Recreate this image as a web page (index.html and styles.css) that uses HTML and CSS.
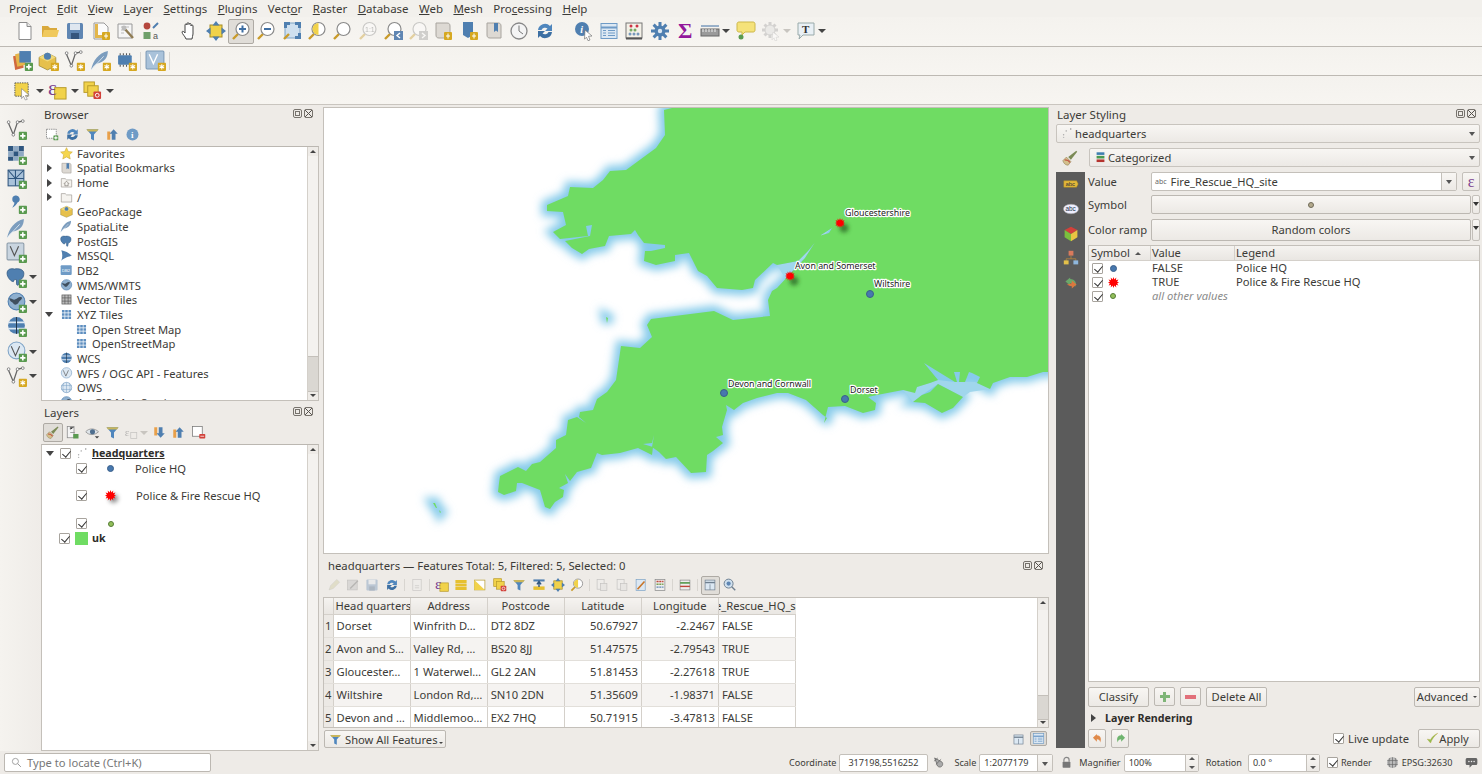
FILE: index.html
```html
<!DOCTYPE html>
<html lang="en">
<head>
    <meta charset="UTF-8">
    <title>QGIS</title>
    <link rel="stylesheet" href="styles.css">
</head>
<body>
<svg class="defs" aria-hidden="true">
    <symbol id="plus" viewBox="0 0 8 8"><rect width="8" height="8" rx="1" fill="#5a9a50"/><path d="M4 1.5v5M1.5 4h5" stroke="#fff" stroke-width="1.6"/></symbol>
    <symbol id="star" viewBox="0 0 8 8"><rect width="8" height="8" rx="1" fill="#d6a821"/><path d="M4 1.5v5M1.8 2.8l4.4 2.4M6.2 2.8L1.8 5.2" stroke="#fff" stroke-width="1"/></symbol>
    <symbol id="new" viewBox="0 0 20 20"><path d="M4 1.5h8l4 4v13H4z" fill="#fff" stroke="#8c8c8c"/><path d="M12 1.5v4h4" fill="#e8e8e8" stroke="#8c8c8c"/></symbol>
    <symbol id="open" viewBox="0 0 20 20"><path d="M2 5h6l2 2h7v9H2z" fill="#d9a93c"/><path d="M2 16l2-7h15l-2 7z" fill="#f0c95c"/></symbol>
    <symbol id="save" viewBox="0 0 20 20"><rect x="2" y="2" width="16" height="16" rx="1.5" fill="#5f86b3"/><rect x="5" y="2.5" width="10" height="6.5" fill="#dfe7f0"/><rect x="6" y="12" width="8" height="6" fill="#35557c"/></symbol>
    <symbol id="layout" viewBox="0 0 20 20"><path d="M3 2h10l4 4v12H3z" fill="#fbfbfb" stroke="#999"/><path d="M4 3h3v14H4zM4 14h10v3H4z" fill="#e3b64a"/><rect x="11" y="11" width="8" height="8" rx="1" fill="#d6a821"/><path d="M15 12.500v5M13 15h4" stroke="#fff"/></symbol>
    <symbol id="manager" viewBox="0 0 20 20"><path d="M2 3h14v14H2z" fill="#f6f6f6" stroke="#999"/><path d="M5 6h8M5 9h4M5 12h3" stroke="#bbb"/><path d="M8 7l9 10" stroke="#8f7b52" stroke-width="2.4"/><circle cx="8" cy="7" r="2.4" fill="#bcbcbc"/></symbol>
    <symbol id="style" viewBox="0 0 20 20"><circle cx="6" cy="5" r="3.4" fill="#b5483e"/><rect x="2.5" y="11" width="7" height="7" fill="#6fa06a"/><path d="M12 7l5-5" stroke="#4f7fb0" stroke-width="2"/><text x="12" y="18" font-size="9" fill="#555" font-family="Liberation Sans">a</text></symbol>
    <symbol id="pan" viewBox="0 0 20 20"><path d="M6 18c-1-3-4-5-4-7 0-1 2-1 3 1V4c0-1.500 2-1.500 2 0V2.800c0-1.500 2-1.500 2 0V3.500c0-1.500 2-1.500 2 0V5c0-1.500 2-1.500 2 0v8c0 2-1 3-1 5z" fill="#fff" stroke="#444"/></symbol>
    <symbol id="pansel" viewBox="0 0 20 20"><rect x="4" y="4" width="12" height="12" fill="#f1d24a" stroke="#a58c24"/><path d="M10 0l3.500 4.500h-7zM10 20l-3.500-4.500h7zM0 10l4.500-3.500v7zM20 10l-4.500 3.500v-7z" fill="#4f7fb0"/></symbol>
    <symbol id="mag" viewBox="0 0 20 20"><path d="M7 13l-5 5" stroke="#c99b2a" stroke-width="2.4"/><circle cx="11.5" cy="8" r="6.5" fill="#fff" stroke="#8a8a8a" stroke-width="1.2"/></symbol>
    <symbol id="zoomin" viewBox="0 0 20 20"><use href="#mag"/><path d="M11.5 4.500v7M8 8h7" stroke="#3f6fa3" stroke-width="2"/></symbol>
    <symbol id="zoomout" viewBox="0 0 20 20"><use href="#mag"/><path d="M8 8h7" stroke="#3f6fa3" stroke-width="2"/></symbol>
    <symbol id="zoomfull" viewBox="0 0 20 20"><rect x="3" y="2" width="15" height="15" fill="#cfe0ef" stroke="#7ea3c6"/><path d="M2 1h6v3H5v3H2zM19 1h-6v3h3v3h3zM19 18h-6v-3h3v-3h3z" fill="#4f7fb0"/><path d="M7 13l-5 5" stroke="#c99b2a" stroke-width="2.4"/></symbol>
    <symbol id="zoomsel" viewBox="0 0 20 20"><use href="#mag"/><path d="M11.5 2a6 6 0 0 0 0 12z" fill="#f1d24a"/></symbol>
    <symbol id="zoomnat" viewBox="0 0 20 20" opacity=".4"><use href="#mag"/><text x="7" y="11" font-size="7" fill="#666" font-family="Liberation Sans">1:1</text></symbol>
    <symbol id="zoomlast" viewBox="0 0 20 20"><use href="#mag"/><rect x="11" y="10" width="9" height="9" fill="#5f86b3"/><path d="M17 12l-3 2.5 3 2.500" fill="none" stroke="#fff" stroke-width="1.4"/></symbol>
    <symbol id="zoomnext" viewBox="0 0 20 20" opacity=".4"><use href="#mag"/><rect x="11" y="10" width="9" height="9" fill="#999"/><path d="M14 12l3 2.5-3 2.500" fill="none" stroke="#fff" stroke-width="1.4"/></symbol>
    <symbol id="scroll" viewBox="0 0 20 20"><path d="M3 2h11c2 0 3 1 3 3v12H6c-2 0-3-1-3-3z" fill="#ddd9d3" stroke="#a8a49e"/></symbol>
    <symbol id="bkadd" viewBox="0 0 20 20"><use href="#scroll"/><rect x="11" y="11" width="8" height="8" rx="1" fill="#d6a821"/><path d="M15 12.500v5M13 15h4" stroke="#fff"/></symbol>
    <symbol id="bkshow" viewBox="0 0 20 20"><path d="M4 1h10v13l-5 3-5-3z" fill="#4f7fb0"/><rect x="11" y="11" width="8" height="8" rx="1" fill="#d6a821"/><path d="M15 12.500v5M13 15h4" stroke="#fff"/></symbol>
    <symbol id="bkscroll" viewBox="0 0 20 20"><use href="#scroll"/><path d="M10 2h4v9l-2-1.500-2 1.500z" fill="#4f7fb0"/></symbol>
    <symbol id="clock" viewBox="0 0 20 20"><circle cx="10" cy="10" r="8" fill="#f4f4f4" stroke="#888" stroke-width="1.3"/><path d="M10 4.500V10l4 3" fill="none" stroke="#777"/></symbol>
    <symbol id="refresh" viewBox="0 0 20 20"><path d="M3 9a7 7 0 0 1 12-4l2-2v7h-7l2.500-2.500A4 4 0 0 0 6.500 9z" fill="#4f86bd"/><path d="M17 11a7 7 0 0 1-12 4l-2 2v-7h7l-2.500 2.500a4 4 0 0 0 6 -1.500z" fill="#3c6fa3"/></symbol>
    <symbol id="identify" viewBox="0 0 20 20"><circle cx="8" cy="8" r="7" fill="#4f7fb0"/><text x="6.200" y="12" font-size="10" font-weight="bold" font-style="italic" fill="#fff" font-family="Liberation Serif">i</text><path d="M11 9l7 6-3.500.3 1.500 3.700-2 .7-1.500-3.500-2 2z" fill="#fff" stroke="#777" stroke-width=".7"/></symbol>
    <symbol id="table" viewBox="0 0 20 20"><rect x="2" y="2.500" width="16" height="15" fill="#dce8f3" stroke="#6f9bc6"/><path d="M2 6.500h16" stroke="#6f9bc6" stroke-width="2"/><path d="M4 9.500h3M9 9.500h7M4 12h3M9 12h7M4 14.500h3M9 14.500h7" stroke="#6f9bc6"/></symbol>
    <symbol id="abacus" viewBox="0 0 20 20"><rect x="2" y="2" width="16" height="15" fill="#f4f1e8" stroke="#777"/><path d="M2 17.500h16" stroke="#555" stroke-width="2"/><circle cx="7" cy="5" r="1.500" fill="#c34"/><circle cx="13" cy="5" r="1.500" fill="#c34"/><circle cx="7" cy="9" r="1.500" fill="#7a6"/><circle cx="11" cy="9" r="1.500" fill="#7a6"/><circle cx="6" cy="13" r="1.500" fill="#79b"/><circle cx="10" cy="13" r="1.500" fill="#79b"/><circle cx="14" cy="13" r="1.500" fill="#79b"/></symbol>
    <symbol id="gear" viewBox="0 0 20 20"><path d="M10 1v18M1 10h18M3.600 3.600l12.800 12.800M16.400 3.600L3.600 16.400" stroke="#4f7fb0" stroke-width="3"/><circle cx="10" cy="10" r="5.500" fill="#4f7fb0"/><circle cx="10" cy="10" r="2.200" fill="#dce8f3"/></symbol>
    <symbol id="ruler" viewBox="0 0 20 20"><rect x="1" y="8" width="18" height="7" fill="#9a9a9a" stroke="#666"/><path d="M3 8v3M6 8v3M9 8v3M12 8v3M15 8v3" stroke="#eee"/><path d="M1 5h18" stroke="#3f6fa3"/></symbol>
    <symbol id="tip" viewBox="0 0 20 20"><path d="M3 1h14c1.500 0 2 1 2 2v6c0 1.500-1 2-2 2H9l-3 3v-3H3c-1.500 0-2-1-2-2V3c0-1 .5-2 2-2z" fill="#f5e27a" stroke="#cdb84a"/><circle cx="5" cy="16" r="2.500" fill="#5a9a50"/></symbol>
    <symbol id="gearoff" viewBox="0 0 20 20" opacity=".45"><path d="M9 1v16M1 9h16M3.500 3.500l11 11M14.500 3.500l-11 11" stroke="#aaa" stroke-width="3"/><circle cx="9" cy="9" r="5" fill="#ddd" stroke="#aaa"/><path d="M12 11l6 5-3 .3 1 3-2 .5-1-3-2 2z" fill="#fff" stroke="#aaa" stroke-width=".6"/></symbol>
    <symbol id="ttext" viewBox="0 0 20 20"><path d="M2 2h16v12H7l-4 4 1-4H2z" fill="#e9f0f5" stroke="#9aa"/><text x="6" y="12" font-size="11" font-weight="bold" fill="#333" font-family="Liberation Serif">T</text></symbol>
    <symbol id="addlayers" viewBox="0 0 20 20"><path d="M1 6l9-2 1 13-8 2z" fill="#d1693f"/><path d="M3 4l9-2 1 12-8 2z" fill="#e5b64a"/><rect x="7" y="1" width="11" height="11" fill="#4f7fb0"/><use href="#plus" x="12" y="12" width="8" height="8"/></symbol>
    <symbol id="gpkgnew" viewBox="0 0 20 20"><path d="M1 7l8-4 8 4v8l-8 4-8-4z" fill="#e6c04c" stroke="#8b7a2e" stroke-width=".6"/><path d="M1 7l8 4 8-4-8-4z" fill="#f1d97a"/><circle cx="9" cy="6" r="3.400" fill="#4f7fb0"/><use href="#star" x="12" y="12" width="8" height="8"/></symbol>
    <symbol id="vec" viewBox="0 0 20 20"><path d="M2 3l5 12 4-12 5-1" fill="none" stroke="#666" stroke-width="1.2"/><circle cx="2.500" cy="3" r="1.300" fill="#fff" stroke="#666" stroke-width=".7"/><circle cx="7" cy="15" r="1.300" fill="#fff" stroke="#666" stroke-width=".7"/><circle cx="11" cy="3" r="1.300" fill="#fff" stroke="#666" stroke-width=".7"/><circle cx="16" cy="2" r="1.300" fill="#fff" stroke="#666" stroke-width=".7"/></symbol>
    <symbol id="vecstar" viewBox="0 0 20 20"><use href="#vec"/><use href="#star" x="12" y="12" width="8" height="8"/></symbol>
    <symbol id="vecplus" viewBox="0 0 20 20"><use href="#vec"/><use href="#plus" x="12" y="12" width="8" height="8"/></symbol>
    <symbol id="feather" viewBox="0 0 20 20"><path d="M1 19C3 10 8 3 17 1c0 6-3 11-11 12L3 16z" fill="#7c9dbe"/><path d="M1 19L13 6" stroke="#e4ecf3" stroke-width=".8"/></symbol>
    <symbol id="featherstar" viewBox="0 0 20 20"><use href="#feather"/><use href="#star" x="12" y="12" width="8" height="8"/></symbol>
    <symbol id="featherplus" viewBox="0 0 20 20"><use href="#feather"/><use href="#plus" x="12" y="12" width="8" height="8"/></symbol>
    <symbol id="chip" viewBox="0 0 20 20"><rect x="2" y="5" width="13" height="9" rx="1" fill="#4f7fb0"/><path d="M4 3v2M7 3v2M10 3v2M13 3v2M4 14v2M7 14v2M10 14v2" stroke="#555"/><use href="#star" x="12" y="12" width="8" height="8"/></symbol>
    <symbol id="virt" viewBox="0 0 20 20"><rect x="1" y="1" width="17" height="17" rx="1" fill="#a9c2da" stroke="#7d9ab6"/><path d="M4 4l4 9 4-9" fill="none" stroke="#fff" stroke-width="1.3"/><use href="#star" x="12" y="12" width="8" height="8"/></symbol>
    <symbol id="virtplus" viewBox="0 0 20 20"><rect x="1" y="1" width="16" height="16" rx="1" fill="#c9d5e0" stroke="#8a9aa8"/><path d="M4 4l4 9 4-9" fill="none" stroke="#555" stroke-width="1.1"/><use href="#plus" x="12" y="12" width="8" height="8"/></symbol>
    <symbol id="sel" viewBox="0 0 20 20"><rect x="2" y="2" width="14" height="14" fill="#f1d24a" stroke="#555" stroke-dasharray="1.5 1"/><path d="M9 8l8 7-4 .3 2 4-2 .7-2-4-2 2.500z" fill="#fff" stroke="#777" stroke-width=".6"/></symbol>
    <symbol id="selexpr" viewBox="0 0 20 20"><rect x="7" y="7" width="12" height="12" fill="#f1d24a" stroke="#b79a2a"/><text x="0" y="15" font-size="22" fill="#7b3f8f" font-family="Liberation Serif">&#949;</text></symbol>
    <symbol id="desel" viewBox="0 0 20 20"><rect x="1" y="1" width="11" height="11" fill="#f1d24a" stroke="#b79a2a"/><rect x="5" y="5" width="11" height="11" fill="#f1d24a" stroke="#b79a2a"/><rect x="11" y="11" width="8" height="8" rx="1" fill="#d2413a"/><circle cx="15" cy="15" r="2" fill="none" stroke="#fff"/></symbol>
    <symbol id="rast" viewBox="0 0 20 20"><path d="M2 2h5v5H2zM12 2h5v5h-5zM7 7h5v5H7zM2 12h5v4H2z" fill="#2f567f"/><path d="M7 2h5v5H7zM2 7h5v5H2zM12 7h5v5h-5zM7 12h5v4H7z" fill="#8fa9c4"/><use href="#plus" x="12" y="12" width="8" height="8"/></symbol>
    <symbol id="mesh" viewBox="0 0 20 20"><rect x="2" y="2" width="15" height="15" fill="#a9c2da" stroke="#2f567f"/><path d="M2 10h15M9 2v15M2 2l7 8M9 10l8-8" stroke="#2f567f"/><use href="#plus" x="12" y="12" width="8" height="8"/></symbol>
    <symbol id="wave" viewBox="0 0 20 20"><path d="M6 6a3.500 3.500 0 1 1 5 3c-1 2-3 4-5 5 1-2 2-3 2-5-1 0-2-1-2-3z" fill="#4f7fb0"/><use href="#plus" x="12" y="12" width="8" height="8"/></symbol>
    <symbol id="pg" viewBox="0 0 20 20"><path d="M1 6c0-4 4-5 7-4 3-1 9 0 9 4s-2 6-4 6l-1 5c-1 1-2 0-2-1V12H8l-1 2C5 14 1 10 1 6z" fill="#4f7fb0" stroke="#2f567f" stroke-width=".7"/></symbol>
    <symbol id="pgplus" viewBox="0 0 20 20"><use href="#pg"/><use href="#plus" x="12" y="12" width="8" height="8"/></symbol>
    <symbol id="globe" viewBox="0 0 20 20"><circle cx="10" cy="9" r="8" fill="#8fb0cf" stroke="#4f7fb0"/><path d="M3 6c3 0 4 2 6 1s3-3 6-2c1 2-2 3-3 5s-4 3-5 1-3-1-4-5z" fill="#3f4f5f"/></symbol>
    <symbol id="globeplus" viewBox="0 0 20 20"><use href="#globe"/><use href="#plus" x="12" y="12" width="8" height="8"/></symbol>
    <symbol id="wcs" viewBox="0 0 20 20"><circle cx="10" cy="9" r="8" fill="#4f7fb0"/><path d="M2 6h16M2 12h16" stroke="#dce8f3" stroke-width="1.6"/><path d="M10 1v16" stroke="#24374a"/></symbol>
    <symbol id="wcsplus" viewBox="0 0 20 20"><use href="#wcs"/><use href="#plus" x="12" y="12" width="8" height="8"/></symbol>
    <symbol id="wfs" viewBox="0 0 20 20"><circle cx="10" cy="9" r="8" fill="#dce8f3" stroke="#7ea3c6"/><path d="M5 5l4 9 4-9" fill="none" stroke="#555"/></symbol>
    <symbol id="wfsplus" viewBox="0 0 20 20"><use href="#wfs"/><use href="#plus" x="12" y="12" width="8" height="8"/></symbol>
    <symbol id="ows" viewBox="0 0 20 20"><circle cx="10" cy="10" r="8" fill="#dce8f3" stroke="#7ea3c6"/><path d="M2 7h16M2 13h16M10 2v16M6 3c-2 4-2 10 0 14M14 3c2 4 2 10 0 14" fill="none" stroke="#7ea3c6" stroke-width=".8"/></symbol>
    <symbol id="fav" viewBox="0 0 20 20"><path d="M10 1l2.800 6 6.200.7-4.600 4.300 1.300 6.500L10 15.300 4.300 18.500 5.600 12 1 7.700 7.200 7z" fill="#f5d64c" stroke="#c8a530" stroke-width=".8"/></symbol>
    <symbol id="folder" viewBox="0 0 20 20"><path d="M2 4h6l2 2h8v11H2z" fill="#f5f3ef" stroke="#9a968f"/></symbol>
    <symbol id="home" viewBox="0 0 20 20"><use href="#folder"/><path d="M6 12l4-4 4 4M7.500 11v4h5v-4" fill="none" stroke="#77736c"/></symbol>
    <symbol id="gpkg" viewBox="0 0 20 20"><path d="M1 6l9-4 9 4v9l-9 4-9-4z" fill="#e6c04c" stroke="#8b7a2e" stroke-width=".6"/><path d="M1 6l9 4 9-4-9-4z" fill="#f1d97a"/><circle cx="10" cy="6" r="3" fill="#4f7fb0"/></symbol>
    <symbol id="mssql" viewBox="0 0 20 20"><path d="M2 2c5 1 12 4 16 8-4 2-11 3-16 8 2-5 2-11 0-16z" fill="#4f7fb0"/></symbol>
    <symbol id="db2" viewBox="0 0 20 20"><rect x="1" y="2" width="17" height="15" rx="1.5" fill="#6f9bc6"/><text x="3" y="12" font-size="6.500" fill="#fff" font-family="Liberation Sans">DB2</text></symbol>
    <symbol id="vt" viewBox="0 0 20 20"><rect x="3" y="3" width="14" height="14" fill="#bbb" stroke="#555"/><path d="M3 7.500h14M3 12.500h14M7.500 3v14M12.500 3v14" stroke="#555"/></symbol>
    <symbol id="xyz" viewBox="0 0 20 20"><path d="M3 3h4v4H3zM8 3h4v4H8zM13 3h4v4h-4zM3 8h4v4H3zM8 8h4v4H8zM13 8h4v4h-4zM3 13h4v4H3zM8 13h4v4H8zM13 13h4v4h-4z" fill="#5f8fc0"/></symbol>
    <symbol id="bknew" viewBox="0 0 20 20"><rect x="2" y="3" width="13" height="12" fill="#fff" stroke="#777" stroke-dasharray="2 1"/><use href="#plus" x="11" y="11" width="7" height="7"/></symbol>
    <symbol id="filter" viewBox="0 0 20 20"><path d="M2 3h16l-6 7v8l-4-2v-6z" fill="#4f86bd"/><path d="M2 3h16l-2 3H4z" fill="#c9b55a"/></symbol>
    <symbol id="collapse" viewBox="0 0 20 20"><path d="M3 6h4v11H3z" fill="#e9a04a"/><path d="M9 9V17h5V9h3l-5.500-6L6 9z" fill="#4f7fb0"/></symbol>
    <symbol id="expand" viewBox="0 0 20 20"><path d="M3 3h4v11H3z" fill="#e9a04a"/><path d="M9 3v8H6l5.500 6L17 11h-3V3z" fill="#4f7fb0"/></symbol>
    <symbol id="info" viewBox="0 0 20 20"><circle cx="10" cy="10" r="8" fill="#6f9bc6"/><text x="8" y="14.500" font-size="12" font-weight="bold" fill="#fff" font-family="Liberation Serif">i</text></symbol>
    <symbol id="brush" viewBox="0 0 20 20"><path d="M2 13l4-4 5 5-3 4c-3 0-5-2-6-5z" fill="#d4c08c" stroke="#8a7b50" stroke-width=".6"/><path d="M4 12c3 0 5 1 6 3" stroke="#c25a48" stroke-width="1.5" fill="none"/><path d="M8 9l9-7 1 1-7 9z" fill="#7b8a55"/></symbol>
    <symbol id="legend" viewBox="0 0 20 20"><rect x="3" y="2" width="9" height="15" fill="#f4f4f4" stroke="#888"/><path d="M7 6v-3h5M7 10h6" stroke="#888"/><rect x="11" y="12" width="7" height="6" fill="#5a9a50"/></symbol>
    <symbol id="eye" viewBox="0 0 20 20"><path d="M1 9c4-5 12-5 17 0-5 5-13 5-17 0z" fill="#dfe5ea" stroke="#888"/><circle cx="10" cy="9" r="3.400" fill="#4f6f8f"/><path d="M13 15h6l-3 3z" fill="#444"/></symbol>
    <symbol id="exprgray" viewBox="0 0 20 20" opacity=".4"><text x="1" y="14" font-size="15" fill="#666" font-family="Liberation Serif">&#949;</text><rect x="9" y="10" width="8" height="8" fill="none" stroke="#888"/></symbol>
    <symbol id="rmlayer" viewBox="0 0 20 20"><rect x="2" y="2" width="13" height="13" fill="#fff" stroke="#777"/><rect x="11" y="12" width="8" height="6" rx="1" fill="#d2413a"/><path d="M12.500 15h5" stroke="#fff"/></symbol>
    <symbol id="pencil" viewBox="0 0 20 20" opacity=".35"><path d="M3 17l2-6 9-9 4 4-9 9z" fill="#c9c58f" stroke="#888" stroke-width=".6"/></symbol>
    <symbol id="multiedit" viewBox="0 0 20 20" opacity=".4"><rect x="2" y="3" width="14" height="14" fill="#bbb" stroke="#888"/><path d="M6 15L17 4" stroke="#666" stroke-width="2"/></symbol>
    <symbol id="savedis" viewBox="0 0 20 20" opacity=".35"><use href="#save"/></symbol>
    <symbol id="pagedis" viewBox="0 0 20 20" opacity=".35"><rect x="4" y="2" width="12" height="16" fill="#eee" stroke="#888"/><path d="M7 11h6M7 14h6" stroke="#888"/></symbol>
    <symbol id="sellines" viewBox="0 0 20 20"><path d="M2 3h16v4H2zM2 8h16v4H2zM2 13h16v4H2z" fill="#e6c030"/></symbol>
    <symbol id="invert" viewBox="0 0 20 20"><rect x="2" y="3" width="15" height="14" fill="#fff" stroke="#b79a2a"/><path d="M2 3l15 14H2z" fill="#f1d24a"/></symbol>
    <symbol id="moveup" viewBox="0 0 20 20"><path d="M2 12h16v5H2z" fill="#e6c030"/><path d="M2 2h16v3H2z" fill="#4f7fb0"/><path d="M10 5v8M7 9l3-4 3 4" stroke="#2f567f" stroke-width="2" fill="none"/></symbol>
    <symbol id="copyd" viewBox="0 0 20 20" opacity=".4"><rect x="3" y="2" width="10" height="14" fill="#eee" stroke="#888"/><rect x="8" y="8" width="9" height="10" fill="#ddd" stroke="#888"/></symbol>
    <symbol id="calcf" viewBox="0 0 20 20"><rect x="3" y="2" width="13" height="16" fill="#dce8f3" stroke="#7ea3c6"/><path d="M5 16L15 5" stroke="#c9762a" stroke-width="2.4"/></symbol>
    <symbol id="grid" viewBox="0 0 20 20"><rect x="3" y="2" width="14" height="16" fill="#eee" stroke="#888"/><path d="M5 5h3M9 5h3M13 5h2" stroke="#c0453a" stroke-width="2"/><path d="M5 9h3M9 9h3M13 9h2" stroke="#7aa050" stroke-width="2"/><path d="M5 13h3M9 13h3M13 13h2" stroke="#5f86b3" stroke-width="2"/></symbol>
    <symbol id="cond" viewBox="0 0 20 20"><rect x="3" y="3" width="14" height="14" fill="#eee" stroke="#888"/><path d="M3 7h14" stroke="#5a9a50" stroke-width="2.4"/><path d="M3 12h14" stroke="#c0453a" stroke-width="2"/></symbol>
    <symbol id="formv" viewBox="0 0 20 20"><rect x="3" y="3" width="14" height="14" fill="#dce8f3" stroke="#6f7f8f"/><path d="M3 6.500h14" stroke="#6f7f8f" stroke-width="2"/><path d="M10 9v8" stroke="#6f7f8f"/></symbol>
    <symbol id="zoomblue" viewBox="0 0 20 20"><circle cx="8" cy="8" r="6.400" fill="#cfe0ef" stroke="#6f7f8f" stroke-width="1.4"/><circle cx="8" cy="8" r="3" fill="#5f86b3"/><path d="M12.500 12.500l5 5" stroke="#6f7f8f" stroke-width="2"/></symbol>
    <symbol id="points" viewBox="0 0 20 20"><circle cx="4" cy="12" r="1.100" fill="#aaa"/><circle cx="8" cy="6" r="1.100" fill="#999"/><circle cx="4" cy="16" r="1.100" fill="#bbb"/><circle cx="15" cy="3" r="1.100" fill="#888"/></symbol>
    <symbol id="burst" viewBox="0 0 20 20"><path d="M10 0l1.700 4.500L15 1l-.5 4.700L19 4.500l-2.500 4L20 10l-3.500 1.700L19 15.500l-4.500-1.200.5 4.700-3.300-3.500L10 20l-1.700-4.500L5 19l.5-4.700L1 15.500l2.500-3.800L0 10l3.500-1.500L1 4.500l4.500 1.200L5 1l3.300 3.500z" fill="#f00"/></symbol>
    <symbol id="classes" viewBox="0 0 20 20"><rect x="4" y="2" width="12" height="4" fill="#3f7fb0"/><rect x="4" y="7.500" width="12" height="4" fill="#4a9a50"/><rect x="4" y="13" width="12" height="4" fill="#b5332e"/></symbol>
    <symbol id="lblabc" viewBox="0 0 20 20"><path d="M1 6h16l2 4-2 4H1z" fill="#e3b83a" stroke="#a88a20" stroke-width=".6"/><text x="3" y="12.500" font-size="7.500" fill="#333" font-family="Liberation Sans">abc</text></symbol>
    <symbol id="maskabc" viewBox="0 0 20 20"><ellipse cx="10" cy="10" rx="9.500" ry="6" fill="#eef" stroke="#999" stroke-width=".6"/><text x="3" y="12.500" font-size="8" fill="#234" font-family="Liberation Sans">abc</text></symbol>
    <symbol id="cube3d" viewBox="0 0 20 20"><path d="M10 1l8 4-8 5-8-5z" fill="#d2413a"/><path d="M2 5l8 5v9l-8-5z" fill="#7bbf3e"/><path d="M18 5l-8 5v9l8-5z" fill="#e9c542"/></symbol>
    <symbol id="diagram" viewBox="0 0 20 20"><rect x="7" y="1" width="6" height="6" fill="#d97a5c"/><path d="M10 7v4M4 14v-3h12v3" stroke="#b8883c" fill="none"/><rect x="1" y="13" width="6" height="5" fill="#e3c04a"/><rect x="13" y="13" width="6" height="5" fill="#8fb7de"/></symbol>
    <symbol id="history" viewBox="0 0 20 20"><path d="M9 3L3 8l6 5V10c4 0 6 2 6 5 3-5 0-10-6-10z" fill="#6aa76a"/><path d="M11 7l6 5-6 5v-3c-3 0-5-1-6-3 2 1 4 0 6-1z" fill="#d9783f"/></symbol>
    <symbol id="undoi" viewBox="0 0 20 20"><path d="M9 3L3 9l6 6v-4c3 0 5 1 5 5 3-6 0-11-5-11z" fill="#e08a4a"/></symbol>
    <symbol id="redoi" viewBox="0 0 20 20"><path d="M11 3l6 6-6 6v-4c-3 0-5 1-5 5-3-6 0-11 5-11z" fill="#6fb56f"/></symbol>
    <symbol id="check" viewBox="0 0 20 20"><path d="M2 11l5 6C9 11 13 6 18 2c-5 2-9 6-11 10z" fill="#8cc152" stroke="#b9a030" stroke-width=".6"/></symbol>
    <symbol id="lock" viewBox="0 0 20 20"><path d="M6 9V6a4 4 0 0 1 8 0v3" fill="none" stroke="#888" stroke-width="1.8"/><rect x="4" y="9" width="12" height="9" rx="1" fill="#777"/></symbol>
    <symbol id="mouse" viewBox="0 0 20 20"><path d="M4 3l11 6c3 3 1 8-3 8-3 0-5-3-5-6z" fill="#aaa" stroke="#555"/><path d="M3 8l6-5M6 13l8-8" stroke="#555"/></symbol>
    <symbol id="epsg" viewBox="0 0 20 20"><circle cx="10" cy="10" r="8.500" fill="#bbb"/><path d="M2 7h16M2 13h16M10 2v16M6 3c-2 4-2 10 0 14M14 3c2 4 2 10 0 14" fill="none" stroke="#666"/></symbol>
    <symbol id="msg" viewBox="0 0 20 20"><path d="M4 3h12c2 0 3 1 3 3v5c0 2-1 3-3 3h-5l-4 4v-4H4c-2 0-3-1-3-3V6c0-2 1-3 3-3z" fill="#666"/><circle cx="6" cy="8.500" r="1.200" fill="#eee"/><circle cx="10" cy="8.500" r="1.200" fill="#eee"/><circle cx="14" cy="8.500" r="1.200" fill="#eee"/></symbol>
    <symbol id="search" viewBox="0 0 20 20"><circle cx="8" cy="8" r="5.500" fill="none" stroke="#999" stroke-width="1.6"/><path d="M12 12l6 6" stroke="#999" stroke-width="1.8"/></symbol>
</svg>

<nav class="menubar">
    <span>Pro<u>j</u>ect</span><span><u>E</u>dit</span><span><u>V</u>iew</span><span><u>L</u>ayer</span><span><u>S</u>ettings</span><span><u>P</u>lugins</span><span>Vect<u>o</u>r</span><span><u>R</u>aster</span><span><u>D</u>atabase</span><span><u>W</u>eb</span><span><u>M</u>esh</span><span>Pro<u>c</u>essing</span><span><u>H</u>elp</span>
</nav>

<div class="toolbar tb-main">
    <i class="grip"></i>
    <b class="tool"><svg><use href="#new"/></svg></b>
    <b class="tool"><svg><use href="#open"/></svg></b>
    <b class="tool"><svg><use href="#save"/></svg></b>
    <b class="tool"><svg><use href="#layout"/></svg></b>
    <b class="tool"><svg><use href="#manager"/></svg></b>
    <b class="tool"><svg><use href="#style"/></svg></b>
    <i class="grip"></i>
    <b class="tool"><svg><use href="#pan"/></svg></b>
    <b class="tool"><svg><use href="#pansel"/></svg></b>
    <b class="tool on"><svg><use href="#zoomin"/></svg></b>
    <b class="tool"><svg><use href="#zoomout"/></svg></b>
    <b class="tool"><svg><use href="#zoomfull"/></svg></b>
    <b class="tool"><svg><use href="#zoomsel"/></svg></b>
    <b class="tool"><svg><use href="#mag"/></svg></b>
    <b class="tool"><svg><use href="#zoomnat"/></svg></b>
    <b class="tool"><svg><use href="#zoomlast"/></svg></b>
    <b class="tool"><svg><use href="#zoomnext"/></svg></b>
    <b class="tool"><svg><use href="#bkadd"/></svg></b>
    <b class="tool"><svg><use href="#bkshow"/></svg></b>
    <b class="tool"><svg><use href="#bkscroll"/></svg></b>
    <b class="tool"><svg><use href="#clock"/></svg></b>
    <b class="tool"><svg><use href="#refresh"/></svg></b>
    <i class="grip"></i>
    <b class="tool"><svg><use href="#identify"/></svg></b>
    <b class="tool"><svg><use href="#table"/></svg></b>
    <b class="tool"><svg><use href="#abacus"/></svg></b>
    <b class="tool"><svg><use href="#gear"/></svg></b>
    <b class="tool sigma">&Sigma;</b>
    <b class="tool"><svg><use href="#ruler"/></svg></b><i class="caret"></i>
    <b class="tool"><svg><use href="#tip"/></svg></b>
    <b class="tool"><svg><use href="#gearoff"/></svg></b><i class="caret off"></i>
    <b class="tool"><svg><use href="#ttext"/></svg></b><i class="caret"></i>
</div>

<div class="toolbar tb-data">
    <i class="grip"></i>
    <b class="tool"><svg><use href="#addlayers"/></svg></b>
    <b class="tool"><svg><use href="#gpkgnew"/></svg></b>
    <b class="tool"><svg><use href="#vecstar"/></svg></b>
    <b class="tool"><svg><use href="#featherstar"/></svg></b>
    <b class="tool"><svg><use href="#chip"/></svg></b>
    <i class="sep"></i>
    <b class="tool"><svg><use href="#virt"/></svg></b>
    <i class="sep"></i>
</div>

<div class="toolbar tb-select">
    <i class="grip"></i>
    <b class="tool"><svg><use href="#sel"/></svg></b><i class="caret"></i>
    <b class="tool"><svg><use href="#selexpr"/></svg></b><i class="caret"></i>
    <b class="tool"><svg><use href="#desel"/></svg></b><i class="caret"></i>
</div>

<main class="workspace">
    <aside class="layer-strip">
        <i class="grip-h"></i>
        <b class="strip-btn"><svg><use href="#vecplus"/></svg></b>
        <b class="strip-btn"><svg><use href="#rast"/></svg></b>
        <b class="strip-btn"><svg><use href="#mesh"/></svg></b>
        <b class="strip-btn"><svg><use href="#wave"/></svg></b>
        <b class="strip-btn"><svg><use href="#featherplus"/></svg></b>
        <b class="strip-btn"><svg><use href="#virtplus"/></svg></b>
        <b class="strip-btn"><svg><use href="#pgplus"/></svg><i class="caret"></i></b>
        <b class="strip-btn"><svg><use href="#globeplus"/></svg><i class="caret"></i></b>
        <b class="strip-btn"><svg><use href="#wcsplus"/></svg></b>
        <b class="strip-btn"><svg><use href="#wfsplus"/></svg><i class="caret"></i></b>
        <b class="strip-btn"><svg><use href="#vecstar"/></svg><i class="caret"></i></b>
    </aside>

    <section class="left-docks">
        <div class="dock browser-dock">
            <header class="dock-title">Browser<span class="dock-btns"><i></i><i class="x"></i></span></header>
            <div class="dock-tools">
                <b class="mini"><svg><use href="#bknew"/></svg></b>
                <b class="mini"><svg><use href="#refresh"/></svg></b>
                <b class="mini"><svg><use href="#filter"/></svg></b>
                <b class="mini"><svg><use href="#collapse"/></svg></b>
                <b class="mini"><svg><use href="#info"/></svg></b>
            </div>
            <div class="tree">
                <div class="tree-rows browser-rows">
                    <div class="row"><i class="arr none"></i><svg><use href="#fav"/></svg>Favorites</div>
                    <div class="row"><i class="arr"></i><svg><use href="#bkscroll"/></svg>Spatial Bookmarks</div>
                    <div class="row"><i class="arr"></i><svg><use href="#home"/></svg>Home</div>
                    <div class="row"><i class="arr"></i><svg><use href="#folder"/></svg>/</div>
                    <div class="row"><i class="arr none"></i><svg><use href="#gpkg"/></svg>GeoPackage</div>
                    <div class="row"><i class="arr none"></i><svg><use href="#feather"/></svg>SpatiaLite</div>
                    <div class="row"><i class="arr none"></i><svg><use href="#pg"/></svg>PostGIS</div>
                    <div class="row"><i class="arr none"></i><svg><use href="#mssql"/></svg>MSSQL</div>
                    <div class="row"><i class="arr none"></i><svg><use href="#db2"/></svg>DB2</div>
                    <div class="row"><i class="arr none"></i><svg><use href="#globe"/></svg>WMS/WMTS</div>
                    <div class="row"><i class="arr none"></i><svg><use href="#vt"/></svg>Vector Tiles</div>
                    <div class="row"><i class="arr open"></i><svg><use href="#xyz"/></svg>XYZ Tiles</div>
                    <div class="row child"><svg><use href="#xyz"/></svg>Open Street Map</div>
                    <div class="row child"><svg><use href="#xyz"/></svg>OpenStreetMap</div>
                    <div class="row"><i class="arr none"></i><svg><use href="#wcs"/></svg>WCS</div>
                    <div class="row"><i class="arr none"></i><svg><use href="#wfs"/></svg>WFS / OGC API - Features</div>
                    <div class="row"><i class="arr none"></i><svg><use href="#ows"/></svg>OWS</div>
                    <div class="row"><i class="arr none"></i><svg><use href="#globe"/></svg>ArcGIS Map Service</div>
                </div>
                <div class="vscroll"><i class="up"></i><div class="track browser-track"><span></span></div><i class="down"></i></div>
            </div>
        </div>
        <div class="dock layers-dock">
            <header class="dock-title">Layers<span class="dock-btns"><i></i><i class="x"></i></span></header>
            <div class="dock-tools">
                <b class="mini on"><svg><use href="#brush"/></svg></b>
                <b class="mini"><svg><use href="#legend"/></svg></b>
                <b class="mini"><svg><use href="#eye"/></svg></b>
                <b class="mini"><svg><use href="#filter"/></svg></b>
                <b class="mini wide"><svg><use href="#exprgray"/></svg><i class="caret off"></i></b>
                <b class="mini"><svg><use href="#expand"/></svg></b>
                <b class="mini"><svg><use href="#collapse"/></svg></b>
                <b class="mini"><svg><use href="#rmlayer"/></svg></b>
            </div>
            <div class="tree">
                <div class="tree-rows layer-rows">
                    <div class="lrow"><i class="arr open"></i><i class="cb"></i><svg class="sym"><use href="#points"/></svg><strong class="active-layer">headquarters</strong></div>
                    <div class="lrow cat"><i class="cb"></i><i class="dot blue"></i><span>Police HQ</span></div>
                    <div class="lrow cat tall"><i class="cb"></i><svg class="burst-sym"><use href="#burst"/></svg><span>Police &amp; Fire Rescue HQ</span></div>
                    <div class="lrow cat third"><i class="cb"></i><i class="dot small green"></i></div>
                    <div class="lrow"><i class="arr none"></i><i class="cb"></i><i class="swatch"></i><strong>uk</strong></div>
                </div>
                <div class="vscroll"><i class="up"></i><div class="track"></div><i class="down"></i></div>
            </div>
        </div>
    </section>

    <section class="center">
        <div class="map">
            <svg viewBox="324 108 724 445" preserveAspectRatio="none">
                <defs>
                    <filter id="glow" x="-10%" y="-10%" width="120%" height="120%"><feGaussianBlur stdDeviation="4.5"/></filter>
                    <filter id="shadow" x="-100%" y="-100%" width="300%" height="300%"><feGaussianBlur stdDeviation="2"/></filter>
                    <path id="land" d="M672 108L664 110 665 135 656 148 626 170 610 171 603 180 593 188 570 187 568 196 547 205 547 211 563 212 566 225 553 232 560 239 588 236 586 226 592 225 590 236 565 241 572 248 582 254 589 249 605 246 609 236 631 234 635 230 638 235 644 243 665 245 665 248 651 251 645 251 644 261 656 265 675 261 675 255 689 253 698 271 707 276 717 288 742 290 753 288 755 280 773 263 777 265 798 261 808 251 821 235 832 228 829 233 819 236 805 258 791 273 777 288 772 291 768 300 770 316 733 320 714 311 651 319 647 325 652 337 640 348 621 346 616 380 607 392 597 399 593 410 580 412 579 417 586 423 577 417 568 420 566 435 556 440 556 448 540 462 532 464 526 471 518 467 500 476 499 483 498 492 504 495 516 491 517 483 522 483 540 490 545 507 550 509 555 502 563 497 564 490 559 488 568 483 565 474 570 481 577 472 591 468 597 453 602 455 620 453 638 448 652 455 653 447 643 444 652 443 654 435 652 447 659 452 666 459 676 457 691 473 706 472 707 455 713 451 723 443 716 437 723 435 722 427 727 410 726 405 734 410 743 403 757 398 777 393 788 393 806 400 823 415 827 418 824 423 828 407 845 406 863 413 875 410 876 403 868 397 877 395 903 390 915 393 917 387 930 383 938 380 924 363 955 382 957 382 954 372 960 372 959 382 965 382 969 372 972 373 975 382 972 373 980 377 977 383 990 389 993 383 1010 377 1027 377 1043 372 1060 372 1060 100 672 100Z"/>
                    <path id="wight" d="M913 402L922 395 930 392 938 384 963 397 953 408 942 413 925 403Z"/>
                    <path id="specks" d="M433 503l3 5 1 0-2-5ZM439 510l1 3 1-1ZM606 317l1 6 1-5Z"/>
                    <path id="estuary" d="M832 228L808 251 798 261 777 265 785 278 805 258 819 236Z"/>
                    <path id="solent" d="M917 387L938 380 955 382 975 382 977 383 990 389 970 392 963 397 938 384 922 395 913 402 903 390Z"/>
                </defs>
                <g class="water" filter="url(#glow)">
                    <use href="#land"/><use href="#wight"/><use href="#specks"/>
                </g>
                <g class="water-solid">
                    <use href="#estuary"/><use href="#solent"/>
                </g>
                <g class="land">
                    <use href="#land"/><use href="#wight"/><use href="#specks"/>
                </g>
                <g class="markers">
                    <circle class="shadow" cx="844" cy="228" r="4.5" filter="url(#shadow)"/>
                    <circle class="shadow" cx="794" cy="281" r="4.5" filter="url(#shadow)"/>
                    <use href="#burst" x="835" y="218" width="10" height="10"/>
                    <use href="#burst" x="785" y="271" width="10" height="10"/>
                    <circle cx="870" cy="294" r="3.5"/>
                    <circle cx="724" cy="393" r="3.5"/>
                    <circle cx="845" cy="399" r="3.5"/>
                </g>
                <g class="labels">
                    <text x="845" y="216">Gloucestershire</text>
                    <text x="795" y="269">Avon and Somerset</text>
                    <text x="874" y="287">Wiltshire</text>
                    <text x="728" y="387">Devon and Cornwall</text>
                    <text x="850" y="393">Dorset</text>
                </g>
            </svg>
        </div>
        <div class="attr">
            <header class="attr-title">headquarters &mdash; Features Total: 5, Filtered: 5, Selected: 0<span class="dock-btns"><i></i><i class="x"></i></span></header>
            <div class="attr-tools">
                <b class="mt"><svg><use href="#pencil"/></svg></b>
                <b class="mt"><svg><use href="#multiedit"/></svg></b>
                <b class="mt"><svg><use href="#savedis"/></svg></b>
                <b class="mt"><svg><use href="#refresh"/></svg></b>
                <i class="sep"></i>
                <b class="mt"><svg><use href="#pagedis"/></svg></b>
                <i class="sep"></i>
                <b class="mt"><svg><use href="#selexpr"/></svg></b>
                <b class="mt"><svg><use href="#sellines"/></svg></b>
                <b class="mt"><svg><use href="#invert"/></svg></b>
                <b class="mt"><svg><use href="#desel"/></svg></b>
                <b class="mt"><svg><use href="#filter"/></svg></b>
                <b class="mt"><svg><use href="#moveup"/></svg></b>
                <b class="mt"><svg><use href="#pansel"/></svg></b>
                <b class="mt"><svg><use href="#zoomsel"/></svg></b>
                <i class="sep"></i>
                <b class="mt"><svg><use href="#copyd"/></svg></b>
                <b class="mt"><svg><use href="#copyd"/></svg></b>
                <b class="mt"><svg><use href="#calcf"/></svg></b>
                <b class="mt"><svg><use href="#grid"/></svg></b>
                <i class="sep"></i>
                <b class="mt"><svg><use href="#cond"/></svg></b>
                <i class="sep"></i>
                <b class="mt on"><svg><use href="#formv"/></svg></b>
                <b class="mt"><svg><use href="#zoomblue"/></svg></b>
            </div>
            <div class="attr-grid">
                <div class="attr-scroll">
                    <table>
                        <thead>
                            <tr><th class="rh"></th><th>Head quarters</th><th>Address</th><th>Postcode</th><th>Latitude</th><th>Longitude</th><th class="cut">e_Rescue_HQ_s</th></tr>
                        </thead>
                        <tbody>
                            <tr><td class="rh">1</td><td>Dorset</td><td>Winfrith D&hellip;</td><td>DT2 8DZ</td><td class="n">50.67927</td><td class="n">-2.2467</td><td>FALSE</td></tr>
                            <tr><td class="rh">2</td><td>Avon and S&hellip;</td><td>Valley Rd, &hellip;</td><td>BS20 8JJ</td><td class="n">51.47575</td><td class="n">-2.79543</td><td>TRUE</td></tr>
                            <tr><td class="rh">3</td><td>Gloucester&hellip;</td><td>1 Waterwel&hellip;</td><td>GL2 2AN</td><td class="n">51.81453</td><td class="n">-2.27618</td><td>TRUE</td></tr>
                            <tr><td class="rh">4</td><td>Wiltshire</td><td>London Rd,&hellip;</td><td>SN10 2DN</td><td class="n">51.35609</td><td class="n">-1.98371</td><td>FALSE</td></tr>
                            <tr><td class="rh">5</td><td>Devon and &hellip;</td><td>Middlemoo&hellip;</td><td>EX2 7HQ</td><td class="n">50.71915</td><td class="n">-3.47813</td><td>FALSE</td></tr>
                        </tbody>
                    </table>
                </div>
                <div class="vscroll"><i class="up"></i><div class="track attr-track"><span></span></div><i class="down"></i></div>
            </div>
            <div class="attr-foot">
                <span class="btn show-all"><svg><use href="#filter"/></svg>Show All Features<i class="mini-caret"></i></span>
                <span class="foot-right"><i class="view-btn"><svg><use href="#formv"/></svg></i><i class="view-btn on"><svg><use href="#table"/></svg></i></span>
            </div>
        </div>
    </section>

    <aside class="styling">
        <header class="dock-title">Layer Styling<span class="dock-btns"><i></i><i class="x"></i></span></header>
        <div class="combo layer-combo"><svg><use href="#points"/></svg>headquarters<i class="combo-arrow"></i></div>
        <div class="renderer-row">
            <svg class="brush-ic"><use href="#brush"/></svg>
            <div class="combo"><svg><use href="#classes"/></svg>Categorized<i class="combo-arrow"></i></div>
        </div>
        <div class="style-body">
            <div class="tabs">
                <svg><use href="#lblabc"/></svg>
                <svg><use href="#maskabc"/></svg>
                <svg><use href="#cube3d"/></svg>
                <svg><use href="#diagram"/></svg>
                <svg><use href="#history"/></svg>
            </div>
            <div class="style-main">
                <div class="form-row">
                    <label>Value</label>
                    <div class="field value-field"><em>abc</em>Fire_Rescue_HQ_site<i class="field-drop"></i></div>
                    <span class="eps">&#949;</span>
                </div>
                <div class="form-row symbol-row">
                    <label>Symbol</label>
                    <div class="btn wide-btn"><i class="dot small tan"></i></div>
                    <i class="side-drop"></i>
                </div>
                <div class="form-row ramp-row">
                    <label>Color ramp</label>
                    <div class="btn wide-btn">Random colors</div>
                    <i class="side-drop"></i>
                </div>
                <div class="cat-table">
                    <div class="cat-head"><span class="c1">Symbol<i class="sort"></i></span><span class="c2">Value</span><span class="c3">Legend</span></div>
                    <div class="cat-row"><span class="c1"><i class="cb"></i><i class="dot blue"></i></span><span class="c2">FALSE</span><span class="c3">Police HQ</span></div>
                    <div class="cat-row"><span class="c1"><i class="cb"></i><svg class="burst-small"><use href="#burst"/></svg></span><span class="c2">TRUE</span><span class="c3">Police &amp; Fire Rescue HQ</span></div>
                    <div class="cat-row"><span class="c1"><i class="cb"></i><i class="dot small green"></i></span><span class="c2 other">all other values</span></div>
                </div>
                <div class="cat-btns">
                    <span class="btn classify">Classify</span>
                    <span class="btn ic-btn plus-btn"></span>
                    <span class="btn ic-btn minus-btn"></span>
                    <span class="btn delete">Delete All</span>
                    <span class="btn advanced">Advanced<i class="mini-caret"></i></span>
                </div>
                <div class="rendering"><i class="arr dark"></i><strong>Layer Rendering</strong></div>
                <div class="apply-row">
                    <span class="btn ic-btn"><svg><use href="#undoi"/></svg></span>
                    <span class="btn ic-btn"><svg><use href="#redoi"/></svg></span>
                    <span class="live"><i class="cb"></i>Live update</span>
                    <span class="btn apply"><svg><use href="#check"/></svg>Apply</span>
                </div>
            </div>
        </div>
    </aside>
</main>

<footer class="statusbar">
    <div class="locator"><svg><use href="#search"/></svg>Type to locate (Ctrl+K)</div>
    <span class="st-label coord-label">Coordinate</span>
    <div class="st-field coord">317198,5516252</div>
    <svg class="st-ic mouse"><use href="#mouse"/></svg>
    <span class="st-label scale-label">Scale</span>
    <div class="st-field scale">1:2077179<i class="field-drop"></i></div>
    <svg class="st-ic lock"><use href="#lock"/></svg>
    <span class="st-label mag-label">Magnifier</span>
    <div class="st-field spin mag">100%<i class="spin-btns"></i></div>
    <span class="st-label rot-label">Rotation</span>
    <div class="st-field spin rot">0.0 &deg;<i class="spin-btns"></i></div>
    <i class="cb"></i>
    <span class="st-label render-label">Render</span>
    <svg class="st-ic epsg"><use href="#epsg"/></svg>
    <span class="st-label">EPSG:32630</span>
    <svg class="st-ic msg"><use href="#msg"/></svg>
</footer>
</body>
</html>
```

FILE: styles.css
```css
* {
    box-sizing: border-box;
}

html, body {
    margin: 0;
    height: 100%;
    overflow: hidden;
}

body {
    width: 1482px;
    height: 774px;
    background: #eeebe7;
    color: #3c3b37;
    font-family: "Noto Sans", "Open Sans", sans-serif;
    font-size: 11px;
    line-height: 1;
    display: flex;
    flex-direction: column;
}

i, b, em {
    font-style: normal;
    font-weight: normal;
}

.defs {
    display: none;
}

/* menu and toolbars */
.menubar {
    height: 17px;
    padding: 1px 0 0 9px;
    display: flex;
    gap: 10.4px;
    font-size: 11.5px;
    line-height: 15px;
    background: #f2f0ec;
}

.menubar u {
    text-underline-offset: 1px;
}

.toolbar {
    display: flex;
    align-items: center;
    background: linear-gradient(#f4f2ee, #f7f5f1);
    border-bottom: 1px solid #bdb9b3;
    padding-left: 4px;
}

.tb-main { height: 30px; }
.tb-data { height: 30px; }
.tb-select { height: 29px; padding-top: 1px; border-bottom-color: #c9c5bf; }

.grip {
    width: 4px;
    height: 14px;
    flex: none;
    margin: 0 3px 0 1px;
    background-image: radial-gradient(#b5b1aa 35%, transparent 40%);
    background-size: 2px 2px;
}

.tool {
    width: 25.3px;
    height: 25px;
    flex: none;
    display: flex;
    align-items: center;
    justify-content: center;
    border: 1px solid transparent;
    border-radius: 2px;
}

.tool svg {
    width: 20px;
    height: 20px;
}

.tool.on, .mini.on, .mt.on {
    background: #e0ddd8;
    border: 1px solid #aeaaa4;
}

.sigma {
    color: #93179b;
    font-family: "Liberation Serif", serif;
    font-size: 22px;
    font-weight: bold;
}

.tb-main .tool + .grip {
    margin: 0 5px 0 5px;
}

.caret {
    width: 0;
    height: 0;
    flex: none;
    margin: 0 3px 0 -1px;
    border: 4px solid transparent;
    border-top: 4px solid #444;
    border-bottom: 0;
}

.caret.off {
    border-top-color: #c8c5c0;
}

.sep {
    width: 1px;
    height: 18px;
    flex: none;
    margin: 0 1px;
    background: #d8d5d0;
}

.tb-data .grip {
    margin-right: 0;
}

.tb-data .tool {
    width: 26px;
}

.tb-data .tool svg, .tb-select .tool svg {
    width: 21px;
    height: 21px;
}

.tb-select .tool {
    width: 21px;
}

.tb-select .caret {
    margin: 0 3px;
}

/* main area */
.workspace {
    height: 646px;
    display: flex;
}

.layer-strip {
    width: 41px;
    flex: none;
    padding-left: 6px;
    background: linear-gradient(90deg, #f5f3ef, #efece8);
    display: flex;
    flex-direction: column;
}

.grip-h {
    height: 12px;
    flex: none;
}

.strip-btn {
    height: 24.7px;
    display: flex;
    align-items: center;
    gap: 2px;
    flex: none;
}

.strip-btn svg {
    width: 21px;
    height: 21px;
    flex: none;
}

.strip-btn .caret {
    margin: 0;
}

.left-docks {
    width: 278px;
    flex: none;
    display: flex;
    flex-direction: column;
}

.dock-title {
    height: 19px;
    padding: 3px 6px 0 3px;
    font-size: 11.5px;
    line-height: 14px;
    display: flex;
    justify-content: space-between;
}

.dock-btns {
    display: flex;
    gap: 2px;
    padding-top: 1px;
}

.dock-btns i {
    width: 9px;
    height: 9px;
    border: 1px solid #77736d;
    border-radius: 2px;
    position: relative;
}

.dock-btns i::after {
    content: "";
    position: absolute;
    left: 1px;
    top: 1px;
    width: 3px;
    height: 3px;
    border: 1px solid #77736d;
}

.dock-btns .x {
    background: linear-gradient(45deg, transparent 44%, #55514c 44%, #55514c 56%, transparent 56%), linear-gradient(-45deg, transparent 44%, #55514c 44%, #55514c 56%, transparent 56%);
}

.dock-btns .x::after {
    display: none;
}

.dock-tools {
    height: 21px;
    padding-left: 2px;
    display: flex;
    align-items: center;
}

.mini {
    width: 19.8px;
    height: 19px;
    flex: none;
    display: flex;
    align-items: center;
    justify-content: center;
    border-radius: 2px;
}

.mini svg {
    width: 15px;
    height: 15px;
    flex: none;
}

.mini.wide {
    width: 27px;
}

.mini .caret {
    margin: 0 0 0 1px;
}

.browser-dock {
    height: 296px;
    display: flex;
    flex-direction: column;
}

.layers-dock {
    height: 348px;
    margin-top: 2px;
    display: flex;
    flex-direction: column;
}

.tree {
    flex: 1;
    min-height: 0;
    margin-top: 1px;
    display: flex;
    background: #fff;
    border: 1px solid #c4c0ba;
    border-top-color: #bbb7b1;
    overflow: hidden;
}

.tree-rows {
    flex: 1;
    overflow: hidden;
}

.browser-rows {
    margin-top: -1px;
}

.row {
    height: 14.67px;
    padding-left: 3px;
    display: flex;
    align-items: center;
    white-space: nowrap;
    font-size: 11.2px;
}

.row.child {
    padding-left: 33px;
}

.row svg {
    width: 13px;
    height: 13px;
    flex: none;
    margin-right: 4px;
}

.arr {
    width: 0;
    height: 0;
    flex: none;
    margin: 0 8px 0 2px;
    border: 4px solid transparent;
    border-left: 5px solid #444;
    border-right: 0;
}

.arr.none {
    border-color: transparent;
}

.arr.open {
    margin: 0 7px 0 0;
    border: 4px solid transparent;
    border-top: 5px solid #444;
    border-bottom: 0;
}

.vscroll {
    width: 11px;
    flex: none;
    display: flex;
    flex-direction: column;
    background: #eeebe7;
    border-left: 1px solid #d4d0ca;
}

.vscroll .up, .vscroll .down {
    height: 9px;
    flex: none;
    position: relative;
}

.vscroll .up::after, .vscroll .down::after {
    content: "";
    position: absolute;
    left: 2px;
    top: 3px;
    border: 3px solid transparent;
    border-bottom: 3px solid #444;
    border-top: 0;
}

.vscroll .down::after {
    border-top: 3px solid #444;
    border-bottom: 0;
}

.track {
    flex: 1;
    position: relative;
    background: #f4f2ef;
}

.track span {
    position: absolute;
    left: 0;
    right: 0;
    background: #dad7d2;
    border-top: 1px solid #c4c0ba;
    border-bottom: 1px solid #c4c0ba;
}

.browser-track span {
    top: 200px;
    height: 36px;
}

.attr-track span {
    top: 85px;
    height: 25px;
}

/* layer tree */
.layer-rows {
    padding: 1px 0 0 4px;
}

.lrow {
    height: 15px;
    display: flex;
    align-items: center;
    white-space: nowrap;
    font-size: 11.2px;
}

.lrow .arr.none {
    margin: 0 9px 0 0;
    border-width: 4px;
}

.lrow .arr.open {
    margin-right: 6px;
}

.lrow strong {
    font-weight: bold;
    font-size: 10.7px;
    color: #2e2d2a;
}

.active-layer {
    text-decoration: underline;
}

.lrow .sym {
    width: 13px;
    height: 13px;
    margin: 0 3px 0 5px;
}

.lrow.cat {
    padding-left: 30px;
}

.lrow.tall {
    height: 40px;
    padding-bottom: 1px;
}

.lrow.cat .dot.blue {
    margin: 0 21px 0 20px;
}

.lrow.cat .dot.small {
    margin-left: 21px;
}

.burst-sym {
    width: 11px;
    height: 11px;
    margin: 0 20px 0 18px;
    filter: drop-shadow(3px 3px 2px rgba(0, 0, 0, .45));
}

.cb {
    width: 11px;
    height: 11px;
    flex: none;
    background: #fff;
    border: 1px solid #a8a49e;
    border-radius: 1px;
    position: relative;
}

.cb::after {
    content: "";
    position: absolute;
    left: 3px;
    top: 0;
    width: 4px;
    height: 7px;
    border: solid #333;
    border-width: 0 1.4px 1.4px 0;
    transform: rotate(40deg);
}

.dot {
    display: block;
    flex: none;
    width: 7px;
    height: 7px;
    border-radius: 50%;
    border: 1px solid #3a5f8a;
}

.dot.blue { background: #4778ae; }
.dot.small { width: 6px; height: 6px; }
.dot.green { background: #92bf5a; border-color: #567d36; }
.dot.tan { background: #b3a98c; border-color: #6f6a58; }

.swatch {
    width: 13px;
    height: 13px;
    flex: none;
    margin: 0 4px 0 5px;
    background: #6fdc63;
}

/* centre */
.center {
    width: 726px;
    flex: none;
    margin-left: 4px;
    padding-top: 2px;
    display: flex;
    flex-direction: column;
}

.map {
    height: 447px;
    flex: none;
    background: #fff;
    border: 1px solid #c4c0ba;
    overflow: hidden;
}

.map svg {
    display: block;
    width: 100%;
    height: 100%;
}

.water { fill: #86cbea; stroke: #86cbea; stroke-width: 11; }
.water-solid { fill: #a0d6ec; }
.land { fill: #6fdc63; }

.markers circle {
    fill: #4778ae;
    stroke: #3a5f8a;
}

.markers .shadow {
    fill: #23591d;
    stroke: none;
    opacity: .7;
}

.labels text {
    font-size: 8.8px;
    fill: #222;
    stroke: #fff;
    stroke-width: 2.4px;
    paint-order: stroke;
    stroke-linejoin: round;
}

.attr {
    flex: 1;
    min-height: 0;
    display: flex;
    flex-direction: column;
}

.attr-title {
    height: 22px;
    padding: 6px 6px 0 5px;
    font-size: 11.3px;
    display: flex;
    justify-content: space-between;
}

.attr-tools {
    height: 21px;
    padding-left: 1px;
    display: flex;
    align-items: center;
}

.mt {
    width: 19.4px;
    height: 19px;
    flex: none;
    display: flex;
    align-items: center;
    justify-content: center;
    border-radius: 2px;
}

.mt svg {
    width: 14px;
    height: 14px;
}

.attr-tools .sep {
    height: 12px;
    margin: 0 2.25px;
}

.attr-grid {
    height: 131px;
    flex: none;
    margin-top: 2px;
    display: flex;
    background: #fff;
    border: 1px solid #c4c0ba;
    overflow: hidden;
}

.attr-scroll {
    flex: 1;
    overflow: hidden;
}

.attr-grid .vscroll .up {
    height: 12px;
}

table {
    width: 472px;
    table-layout: fixed;
    border-collapse: collapse;
    font-size: 11.2px;
}

th {
    height: 16px;
    padding: 0 2px;
    width: 77px;
    font-weight: normal;
    text-align: center;
    white-space: nowrap;
    overflow: hidden;
    background: linear-gradient(#f5f3f0, #e9e6e2);
    border-right: 1px solid #d4d0ca;
    border-bottom: 1px solid #d4d0ca;
}

th.rh, td.rh {
    width: 9px;
    padding: 0;
}

th.cut {
    text-align: left;
    padding: 0;
    text-indent: -5px;
    border-right: 0;
}

td {
    height: 23px;
    padding: 0 3px;
    white-space: nowrap;
    overflow: hidden;
    border-right: 1px solid #d4d0ca;
    border-bottom: 1px solid #e2dfda;
}

tr:nth-child(even) td {
    background: #f5f3f1;
}

td.rh, tr:nth-child(even) td.rh {
    background: #ece9e5;
    text-align: center;
}

td.n {
    text-align: right;
}

.attr-foot {
    height: 24px;
    padding: 2px 1px 0 1px;
    display: flex;
    justify-content: space-between;
    align-items: flex-start;
}

.btn {
    display: inline-flex;
    align-items: center;
    justify-content: center;
    background: linear-gradient(#f8f6f3, #ece9e5);
    border: 1px solid #bcb8b2;
    border-radius: 2px;
    font-size: 11.2px;
    white-space: nowrap;
}

.show-all {
    height: 18px;
    padding: 0 2px 0 4px;
}

.show-all svg {
    width: 13px;
    height: 13px;
    margin-right: 3px;
}

.mini-caret {
    margin-left: 1px;
    border: 2px solid transparent;
    border-top: 2px solid #444;
    border-bottom: 0;
    align-self: flex-end;
    margin-bottom: 3px;
}

.foot-right {
    display: flex;
    gap: 5px;
    padding: 2px 1px 0 0;
}

.view-btn {
    width: 14px;
    height: 14px;
    display: flex;
    align-items: center;
    justify-content: center;
}

.view-btn svg {
    width: 13px;
    height: 13px;
}

.view-btn.on {
    width: 17px;
    height: 15px;
    background: #dcd9d4;
    border: 1px solid #aeaaa4;
    border-radius: 2px;
    margin-top: -1px;
}

/* styling panel */
.styling {
    width: 428px;
    flex: none;
    margin-left: 5px;
    padding: 0 2px;
    display: flex;
    flex-direction: column;
}

.styling .dock-title {
    padding: 3px 4px 0 1px;
    height: 18px;
}

.combo {
    height: 19px;
    flex: 1;
    display: flex;
    align-items: center;
    padding-left: 4px;
    background: linear-gradient(#f8f6f3, #ece9e5);
    border: 1px solid #c8c4be;
    border-radius: 2px;
    font-size: 11.2px;
    position: relative;
}

.layer-combo {
    flex: none;
    margin-top: 1px;
}

.combo svg {
    width: 13px;
    height: 13px;
    margin-right: 1px;
}

.combo-arrow {
    position: absolute;
    right: 4px;
    top: 7px;
    border: 3px solid transparent;
    border-top: 4px solid #555;
    border-bottom: 0;
}

.renderer-row {
    height: 19px;
    margin-top: 5px;
    display: flex;
    align-items: center;
}

.brush-ic {
    width: 18px;
    height: 18px;
    margin: 0 10px 0 5px;
    flex: none;
}

.style-body {
    flex: 1;
    min-height: 0;
    margin-top: 5px;
    margin-bottom: 3px;
    display: flex;
}

.tabs {
    width: 29px;
    flex: none;
    margin-right: 3px;
    padding-top: 4px;
    background: #5b5b5b;
    display: flex;
    flex-direction: column;
    align-items: center;
    gap: 8.8px;
}

.tabs svg {
    width: 16px;
    height: 16px;
}

.style-main {
    flex: 1;
    min-width: 0;
    display: flex;
    flex-direction: column;
}

.form-row {
    height: 19px;
    margin-bottom: 4px;
    display: flex;
    align-items: center;
    font-size: 11.2px;
}

.symbol-row {
    margin-bottom: 5px;
}

.ramp-row {
    height: 22px;
    margin-bottom: 4px;
}

.form-row label {
    width: 63px;
    flex: none;
}

.field {
    height: 19px;
    width: 306px;
    flex: none;
    padding-left: 3px;
    display: flex;
    align-items: center;
    background: #fff;
    border: 1px solid #c4c0ba;
    border-radius: 2px;
    position: relative;
}

.field em {
    font-size: 7px;
    color: #666;
    margin-right: 4px;
}

.field-drop {
    position: absolute;
    right: 0;
    top: 0;
    bottom: 0;
    width: 15px;
    background: linear-gradient(#f8f6f3, #ece9e5);
    border-left: 1px solid #c4c0ba;
}

.field-drop::after {
    content: "";
    position: absolute;
    left: 4px;
    top: 7px;
    border: 3px solid transparent;
    border-top: 4px solid #555;
    border-bottom: 0;
}

.eps {
    width: 18px;
    height: 19px;
    margin-left: 5px;
    flex: none;
    display: flex;
    align-items: center;
    justify-content: center;
    color: #7b3f8f;
    font-family: "Liberation Serif", serif;
    font-size: 16px;
    background: linear-gradient(#f8f6f3, #ece9e5);
    border: 1px solid #c4c0ba;
    border-radius: 2px;
}

.wide-btn {
    width: 320px;
    flex: none;
    height: 100%;
}

.side-drop {
    width: 8px;
    height: 100%;
    flex: none;
    margin-left: 1px;
    background: linear-gradient(#f8f6f3, #ece9e5);
    border: 1px solid #c4c0ba;
    border-radius: 2px;
    position: relative;
}

.side-drop::after {
    content: "";
    position: absolute;
    left: 0;
    top: 6px;
    border: 3px solid transparent;
    border-top: 4px solid #333;
    border-bottom: 0;
}

.cat-table {
    height: 437px;
    width: 392px;
    flex: none;
    background: #fff;
    border: 1px solid #c4c0ba;
    font-size: 11.2px;
}

.cat-head {
    height: 15px;
    display: flex;
    align-items: center;
    background: linear-gradient(#f5f3f0, #e9e6e2);
    border-bottom: 1px solid #d4d0ca;
}

.cat-head span {
    height: 100%;
    display: flex;
    align-items: center;
    border-right: 1px solid #d4d0ca;
}

.cat-head .c3 {
    border-right: 0;
}

.sort {
    margin-left: 5px;
    border: 3px solid transparent;
    border-bottom: 3px solid #555;
    border-top: 0;
}

.c1 {
    width: 62px;
    flex: none;
    padding-left: 2px;
    display: flex;
    align-items: center;
}

.c2 {
    width: 84px;
    flex: none;
    padding-left: 1px;
}

.c3 {
    flex: 1;
    padding-left: 1px;
}

.cat-row {
    height: 14px;
    display: flex;
    align-items: center;
}

.cat-row .c1 {
    padding-left: 3px;
}

.cat-row .dot {
    margin-left: 7px;
}

.burst-small {
    width: 11px;
    height: 11px;
    margin-left: 5px;
}

.other {
    color: #8b8b8b;
    font-style: italic;
}

.cat-btns {
    height: 20px;
    margin-top: 5px;
    display: flex;
    gap: 5px;
}

.classify { width: 61px; }
.delete { width: 61px; }

.ic-btn {
    width: 21px;
    height: 19px;
}

.ic-btn svg {
    width: 13px;
    height: 13px;
}

.plus-btn::after {
    content: "";
    width: 10px;
    height: 10px;
    background: linear-gradient(#7fb577, #7fb577) center / 10px 3px no-repeat, linear-gradient(#7fb577, #7fb577) center / 3px 10px no-repeat;
}

.minus-btn::after {
    content: "";
    width: 11px;
    height: 4px;
    background: #e2707a;
}

.advanced {
    width: 66px;
    margin-left: auto;
}

.advanced .mini-caret {
    align-self: center;
    margin: 0 0 0 5px;
}

.rendering {
    height: 14px;
    margin-top: 4px;
    padding-left: 3px;
    display: flex;
    align-items: center;
    font-size: 11.2px;
}

.rendering strong {
    font-weight: bold;
    font-size: 10.7px;
    color: #2e2d2a;
}

.arr.dark {
    margin: 0 9px 0 0;
}

.apply-row {
    height: 19px;
    margin-top: 4px;
    display: flex;
    align-items: center;
    gap: 5px;
}

.apply-row .ic-btn {
    width: 18px;
}

.live {
    margin-left: auto;
    display: flex;
    align-items: center;
    gap: 4px;
    font-size: 11.2px;
    margin-right: 4px;
}

.apply {
    width: 62px;
    height: 19px;
    padding-right: 3px;
}

.apply svg {
    width: 13px;
    height: 13px;
}

/* status bar */
.statusbar {
    height: 23px;
    flex: none;
    display: flex;
    align-items: center;
    font-size: 9.1px;
}

.locator {
    width: 207px;
    height: 19px;
    flex: none;
    margin-left: 4px;
    padding-left: 6px;
    display: flex;
    align-items: center;
    font-size: 11.2px;
    color: #777;
    background: #fff;
    border: 1px solid #bcb8b2;
    border-radius: 2px;
}

.locator svg {
    width: 11px;
    height: 11px;
    margin-right: 5px;
}

.st-field {
    height: 18px;
    flex: none;
    display: flex;
    align-items: center;
    padding-left: 4px;
    background: #fff;
    border: 1px solid #c4c0ba;
    border-radius: 2px;
    position: relative;
}

.st-label {
    flex: none;
}

.coord-label { margin: 0 3px 0 578px; }
.coord { width: 89px; padding-left: 8px; }
.st-ic { flex: none; width: 13px; height: 13px; }
.st-ic.mouse { margin: 0 9px 0 4px; }
.scale-label { margin-right: 3px; }
.scale { width: 74px; }
.st-ic.lock { margin: 0 6px 0 7px; }
.mag-label { margin-right: 3px; }
.mag { width: 75px; }
.rot-label { margin: 0 6px 0 7px; }
.rot { width: 72px; }
.statusbar .cb { margin: 0 3px 0 7px; }
.render-label { margin-right: 14px; }
.st-ic.epsg { margin-right: 3px; }
.st-ic.msg { margin-left: 13px; }

.spin-btns {
    position: absolute;
    right: 0;
    top: 0;
    bottom: 0;
    width: 13px;
    background: linear-gradient(#f8f6f3, #ece9e5);
    border-left: 1px solid #c4c0ba;
}

.spin-btns::before, .spin-btns::after {
    content: "";
    position: absolute;
    left: 3px;
    border: 3px solid transparent;
}

.spin-btns::before {
    top: 2px;
    border-bottom: 3px solid #555;
    border-top: 0;
}

.spin-btns::after {
    bottom: 2px;
    border-top: 3px solid #555;
    border-bottom: 0;
}
```
